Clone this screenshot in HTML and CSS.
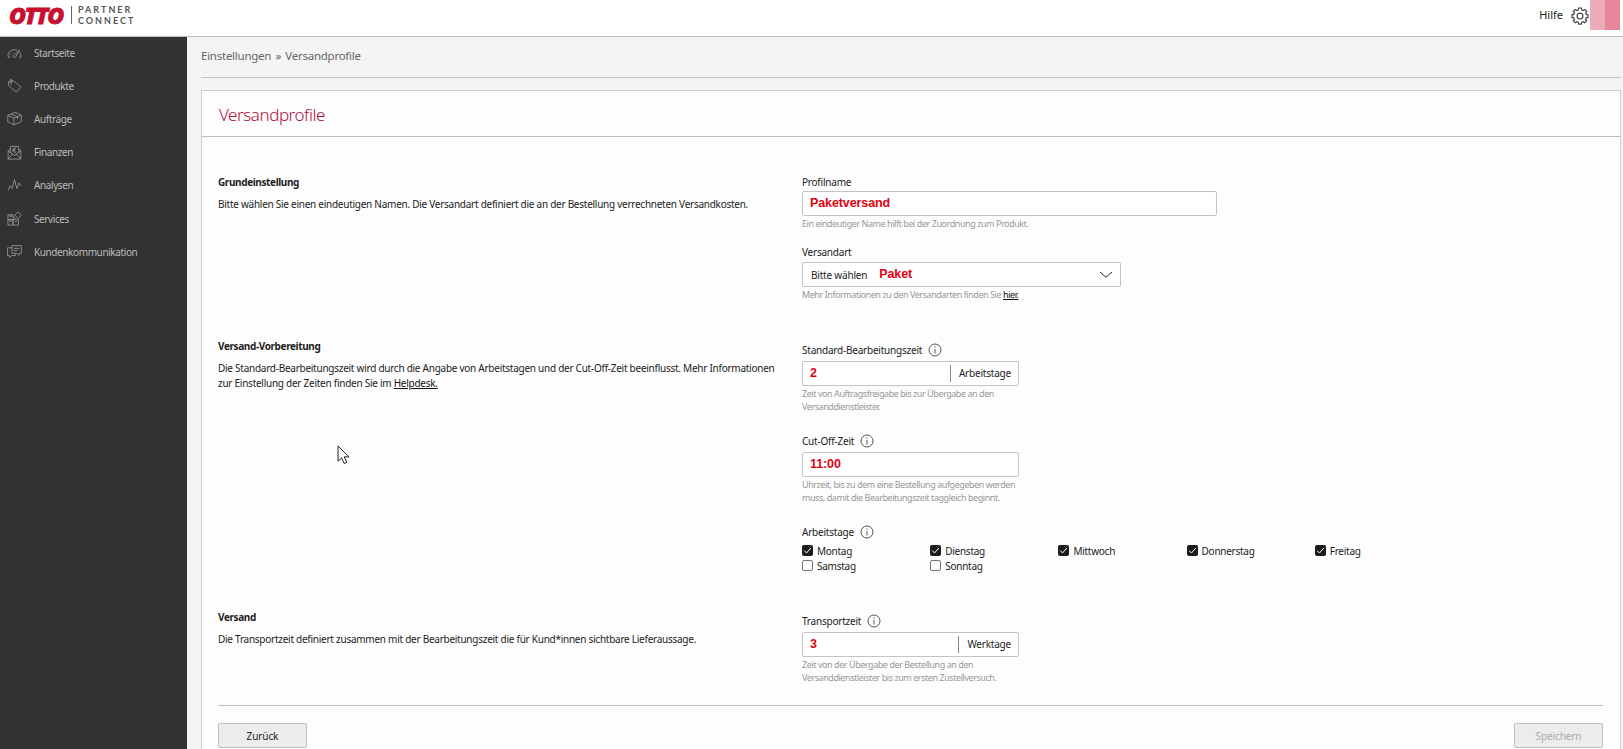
FILE: index.html
```
<!DOCTYPE html>
<html lang="de">
<head>
    <meta charset="UTF-8">
    <meta name="viewport" content="width=device-width, initial-scale=1.0">
    <title>OTTO Partner Connect - Versandprofile</title>
    <link rel="stylesheet" href="styles.css">
</head>
<body>
    <header class="topbar">
        <div class="logo">
            <span class="logo-otto">OTTO</span>
            <span class="logo-sub"><span>PARTNER</span><span>CONNECT</span></span>
        </div>
        <div class="topbar-right">
            <a class="help">Hilfe</a>
            <svg class="gear" viewBox="0 0 18 18">
                <path d="M7.6 1h2.8l.4 2 1.3.6 1.8-1.2 1.9 1.9-1.2 1.8.6 1.3 1.8.4v2.6l-1.9.4-.6 1.4 1.1 1.7-1.9 1.9-1.7-1.1-1.3.6-.4 1.8H7.7l-.4-1.8-1.4-.6-1.7 1.1-1.9-1.9 1.1-1.7-.6-1.4-1.9-.4V7.8l1.9-.4.6-1.3-1.1-1.8 1.9-1.9L6 3.6 7.3 3z"/>
                <circle cx="9" cy="9.1" r="2.9"/>
            </svg>
            <div class="avatar"></div>
        </div>
    </header>

    <div class="layout">
        <nav class="sidebar">
            <a class="nav-item">
                <svg viewBox="0 0 16 16"><path d="M3.500 13H1.300C.3 8.500 3.500 5 8 5c1.200 0 2.100.2 3 .7M13.500 7.500c1.100 1.500 1.500 3.500 1.200 5.500h-1.900M7 13c-.8-1-.1-2 .8-2.500L13.500 5.300 9.600 12c-.6 1.200-1.800 1.700-2.600 1zM3 9.800l1.200.4M5.200 7l.6.8"/></svg>
                <span>Startseite</span>
            </a>
            <a class="nav-item">
                <svg viewBox="0 0 16 16"><path d="M1.500 4 6.500 2.700l8.500 7.100-5 5.200L2 8.500zM4.800 7C3.500 5 3 2.500 4.300 1c1 .8 1.100 2.700.8 4.500"/></svg>
                <span>Produkte</span>
            </a>
            <a class="nav-item">
                <svg viewBox="0 0 16 16"><path d="M.8 4.800 8.500 1.500l6.800 3v6.800l-8 3.500-6.500-3.500zM.8 4.800l6.500 2.900 8-3.200M7.300 7.700v7.100M4.500 3.300l6.700 2.900v2.500"/></svg>
                <span>Aufträge</span>
            </a>
            <a class="nav-item">
                <svg viewBox="0 0 16 16"><path d="M1.200 6v9h13.600V6L12.500 4.500M1.200 6 3.500 4.500M3.500 8.200V1.500h9v6.700M1.200 6.500 8 11l6.800-4.500M1.200 15 6 9.800M14.800 15 10 9.800M9.800 3.500C7.500 2.800 6.600 4 6.600 5.500S7.500 8.300 9.800 7.600M5.800 5h3M5.800 6.200h3"/></svg>
                <span>Finanzen</span>
            </a>
            <a class="nav-item">
                <svg viewBox="0 0 16 16"><path d="m1 13.500 2.300-5.200 2 3L8 1.800l2.500 9.500 2.200-6 2.300 3.200"/></svg>
                <span>Analysen</span>
            </a>
            <a class="nav-item">
                <svg viewBox="0 0 16 16"><path d="M1 4h5.500v5.200H1zM1 9.200h5.500V15H1zM6.500 9.200h5.700V15H6.500zM8.200 4 12 1l3.300 3.500L11.500 8zM6.500 5.500 9 8M3 4v2h1.800V4M3 9.200v2h1.800M8.500 11.200h2"/></svg>
                <span>Services</span>
            </a>
            <a class="nav-item">
                <svg viewBox="0 0 16 16"><path d="M5.300 4H.6v8.300h2v2l2.600-2h3.700V10M5.300 1.800h10v8h-2.400v2.300l-2.900-2.300H5.300zM7.300 4.700h6M7.300 7h4"/></svg>
                <span>Kundenkommunikation</span>
            </a>
        </nav>

        <main class="content">
            <div class="breadcrumb">Einstellungen » Versandprofile</div>

            <div class="card">
                <h1 class="card-title">Versandprofile</h1>
                <form class="card-body">

                    <!-- Grundeinstellung -->
                    <section class="section section-basic">
                        <div class="section-info">
                            <h2>Grundeinstellung</h2>
                            <p>Bitte wählen Sie einen eindeutigen Namen. Die Versandart definiert die an der Bestellung verrechneten Versandkosten.</p>
                        </div>
                        <div class="section-fields">
                            <div class="field">
                                <div class="label">Profilname</div>
                                <div class="input input-wide"><span class="entry">Paketversand</span></div>
                                <div class="hint">Ein eindeutiger Name hilft bei der Zuordnung zum Produkt.</div>
                            </div>
                            <div class="field">
                                <div class="label">Versandart</div>
                                <div class="input input-select">
                                    <span class="placeholder">Bitte wählen</span>
                                    <span class="entry">Paket</span>
                                    <svg class="chevron" viewBox="0 0 14 8"><path d="m1 1.200 6 5 6-5"/></svg>
                                </div>
                                <div class="hint">Mehr Informationen zu den Versandarten finden Sie <a class="link">hier.</a></div>
                            </div>
                        </div>
                    </section>

                    <!-- Versand-Vorbereitung -->
                    <section class="section section-prep">
                        <div class="section-info">
                            <h2>Versand-Vorbereitung</h2>
                            <p>Die Standard-Bearbeitungszeit wird durch die Angabe von Arbeitstagen und der Cut-Off-Zeit beeinflusst. Mehr Informationen<br>zur Einstellung der Zeiten finden Sie im <a class="link">Helpdesk.</a></p>
                        </div>
                        <div class="section-fields">
                            <div class="field">
                                <div class="label">Standard-Bearbeitungszeit
                                    <svg class="info" viewBox="0 0 14 14"><circle cx="7" cy="7" r="6"/><path d="M7 6v4.500M7 3.500v1.200"/></svg>
                                </div>
                                <div class="input"><span class="entry">2</span><span class="unit">Arbeitstage</span></div>
                                <div class="hint">Zeit von Auftragsfreigabe bis zur Übergabe an den<br>Versanddienstleister.</div>
                            </div>
                            <div class="field">
                                <div class="label">Cut-Off-Zeit
                                    <svg class="info" viewBox="0 0 14 14"><circle cx="7" cy="7" r="6"/><path d="M7 6v4.500M7 3.500v1.200"/></svg>
                                </div>
                                <div class="input"><span class="entry">11:00</span></div>
                                <div class="hint">Uhrzeit, bis zu dem eine Bestellung aufgegeben werden<br>muss, damit die Bearbeitungszeit taggleich beginnt.</div>
                            </div>
                            <div class="field">
                                <div class="label">Arbeitstage
                                    <svg class="info" viewBox="0 0 14 14"><circle cx="7" cy="7" r="6"/><path d="M7 6v4.500M7 3.500v1.200"/></svg>
                                </div>
                                <div class="days">
                                    <div class="day"><svg class="box checked" viewBox="0 0 11 11"><path d="m2.300 5.700 2.200 2.300 4.300-5"/></svg>Montag</div>
                                    <div class="day"><svg class="box checked" viewBox="0 0 11 11"><path d="m2.300 5.700 2.200 2.300 4.300-5"/></svg>Dienstag</div>
                                    <div class="day"><svg class="box checked" viewBox="0 0 11 11"><path d="m2.300 5.700 2.200 2.300 4.300-5"/></svg>Mittwoch</div>
                                    <div class="day"><svg class="box checked" viewBox="0 0 11 11"><path d="m2.300 5.700 2.200 2.300 4.300-5"/></svg>Donnerstag</div>
                                    <div class="day"><svg class="box checked" viewBox="0 0 11 11"><path d="m2.300 5.700 2.200 2.300 4.300-5"/></svg>Freitag</div>
                                    <div class="day"><span class="box"></span>Samstag</div>
                                    <div class="day"><span class="box"></span>Sonntag</div>
                                </div>
                            </div>
                        </div>
                    </section>

                    <!-- Versand -->
                    <section class="section section-shipping">
                        <div class="section-info">
                            <h2>Versand</h2>
                            <p>Die Transportzeit definiert zusammen mit der Bearbeitungszeit die für Kund*innen sichtbare Lieferaussage.</p>
                        </div>
                        <div class="section-fields">
                            <div class="field">
                                <div class="label">Transportzeit
                                    <svg class="info" viewBox="0 0 14 14"><circle cx="7" cy="7" r="6"/><path d="M7 6v4.500M7 3.500v1.200"/></svg>
                                </div>
                                <div class="input"><span class="entry">3</span><span class="unit">Werktage</span></div>
                                <div class="hint">Zeit von der Übergabe der Bestellung an den<br>Versanddienstleister bis zum ersten Zustellversuch.</div>
                            </div>
                        </div>
                    </section>

                    <div class="actions">
                        <button type="button" class="btn">Zurück</button>
                        <button type="button" class="btn" disabled>Speichern</button>
                    </div>
                </form>
            </div>
        </main>
    </div>

    <svg class="cursor" viewBox="0 0 13 20"><path d="M1 1v15.200l3.600-3.400 2.600 5.700 2.600-1.200-2.600-5.400h4.900z"/></svg>
</body>
</html>
```
FILE: styles.css
```
* {
    box-sizing: border-box;
}
body {
    margin: 0;
    height: 100vh;
    overflow: hidden;
    display: flex;
    flex-direction: column;
    background-color: #f4f4f4;
    color: #222;
    font-family: "Noto Sans", sans-serif;
    font-size: 10px;
    letter-spacing: -0.26px;
}
svg {
    fill: none;
    stroke: currentColor;
    flex: none;
}

/* Top bar */
.topbar {
    height: 37px;
    flex: none;
    display: flex;
    justify-content: space-between;
    align-items: flex-start;
    background-color: #fff;
    border-bottom: 1px solid #bdbdbd;
}
.logo {
    display: flex;
    padding: 6px 0 0 9px;
}
.logo-otto {
    width: 61px;
    height: 19px;
    line-height: 18px;
    font-family: "Open Sans", sans-serif;
    font-size: 23px;
    font-weight: 800;
    font-style: italic;
    letter-spacing: -1.400px;
    color: #c8102e;
    -webkit-text-stroke: 0.8px #c8102e;
}
.logo-sub {
    display: flex;
    flex-direction: column;
    height: 18px;
    margin-left: 1px;
    padding-left: 6px;
    border-left: 1px solid #666;
    font-family: Lato, sans-serif;
    font-size: 9px;
    font-weight: 700;
    line-height: 10px;
    letter-spacing: 2px;
    color: #555;
}
.logo-sub span {
    margin-top: -1px;
    margin-bottom: 2px;
}
.topbar-right {
    display: flex;
    padding-right: 3px;
}
.help {
    margin-top: 7px;
    font-size: 11px;
    line-height: 16px;
    letter-spacing: 0;
}
.gear {
    width: 18px;
    height: 18px;
    margin: 7px 1px 0 8px;
    stroke: #444;
    stroke-width: 1.200;
}
.avatar {
    width: 30px;
    height: 30px;
    background: linear-gradient(90deg, #ecabb8 50%, #e5869a 50%);
}

/* Sidebar */
.layout {
    flex: 1;
    min-height: 0;
    display: flex;
}
.sidebar {
    width: 187px;
    flex: none;
    background-color: #323232;
    color: #bbb;
}
.nav-item {
    display: flex;
    align-items: center;
    gap: 12px;
    height: 33.200px;
    padding: 0 0 2px 7px;
    letter-spacing: -0.4px;
}
.nav-item svg {
    width: 15px;
    height: 15px;
    stroke: #999;
    stroke-width: 0.9;
}

/* Content */
.content {
    flex: 1;
    display: flex;
    flex-direction: column;
    padding: 0 2px 0 14px;
}
.breadcrumb {
    height: 41px;
    flex: none;
    padding-top: 10px;
    border-bottom: 1px solid #c4c4c4;
    font-size: 11.500px;
    line-height: 18px;
    letter-spacing: -0.25px;
    word-spacing: 1.500px;
    color: #666;
}
.card {
    flex: 1;
    min-height: 0;
    margin-top: 12px;
    background-color: #fdfdfd;
    border: 1px solid #ccc;
    border-bottom: 0;
}
.card-title {
    height: 46px;
    margin: 0;
    padding-left: 17px;
    border-bottom: 1px solid #bdbdbd;
    font-size: 17px;
    font-weight: 300;
    line-height: 47px;
    letter-spacing: -0.45px;
    color: #b0103a;
}
.card-body {
    padding: 36px 17px 0 16px;
}
.section {
    display: grid;
    grid-template-columns: 584px 1fr;
}
.section-basic {
    height: 164px;
}
.section-prep {
    height: 271px;
}
.section-shipping {
    height: 97px;
}
.section h2 {
    margin: 0;
    font-size: 10px;
    font-weight: 700;
    line-height: 18px;
    letter-spacing: -0.38px;
}
.section p {
    margin: 6px 0 0;
    line-height: 15px;
    white-space: nowrap;
}
.link {
    color: #111;
    text-decoration: underline;
}

/* Fields */
.field {
    margin-bottom: 12px;
}
.section-prep .field {
    margin-bottom: 18px;
}
.section-prep .section-fields,
.section-shipping .section-fields {
    padding-top: 3px;
}
.label {
    display: flex;
    align-items: center;
    gap: 6px;
    height: 20px;
    padding-bottom: 1px;
    margin-bottom: 1px;
    letter-spacing: -0.22px;
}
.section-basic .label {
    height: 18px;
    margin-bottom: 0;
    padding-bottom: 0;
}
.section-basic .field + .field .label {
    height: 20px;
}
.info {
    width: 14px;
    height: 14px;
    stroke: #444;
    stroke-width: 0.9;
}
.input {
    width: 217px;
    height: 25px;
    display: flex;
    align-items: center;
    padding: 0 7px;
    background-color: #fff;
    border: 1px solid #c4c4c4;
    border-radius: 2px;
    letter-spacing: -0.2px;
}
.input-wide {
    width: 415px;
}
.input-select {
    width: 319px;
    padding-left: 8px;
}
.placeholder {
    margin-right: 12px;
}
.chevron {
    width: 14px;
    height: 8px;
    margin-left: auto;
    stroke: #222;
}
.entry {
    padding-bottom: 1px;
    font-family: "Liberation Sans", Arial, sans-serif;
    font-size: 12.500px;
    font-weight: 700;
    letter-spacing: -0.1px;
    color: #e3000f;
}
.unit {
    height: 17px;
    margin-left: auto;
    padding-left: 8px;
    border-left: 1px solid #888;
    line-height: 17px;
}
.hint {
    padding-top: 1px;
    font-size: 9px;
    line-height: 13px;
    letter-spacing: -0.44px;
    color: #999;
}
.days {
    display: grid;
    grid-template-columns: repeat(5, 128.200px);
    grid-auto-rows: 15px;
}
.day {
    display: flex;
    align-items: center;
    gap: 4px;
}
.box {
    width: 11px;
    height: 11px;
    border: 1px solid #777;
    border-radius: 2px;
    background-color: #fff;
}
.box.checked {
    border: 0;
    background-color: #1c1c1c;
    stroke: #fff;
}

/* Buttons */
.actions {
    display: flex;
    justify-content: space-between;
    padding-top: 17px;
    border-top: 1px solid #bdbdbd;
}
.btn {
    width: 89px;
    height: 25px;
    padding: 0;
    background-color: #ececec;
    border: 1px solid #bdbdbd;
    border-radius: 2px;
    font-family: inherit;
    font-size: 10px;
    letter-spacing: -0.1px;
    color: #222;
}
.btn:disabled {
    color: #aaa;
}

.cursor {
    position: absolute;
    left: 337px;
    top: 445px;
    width: 13px;
    height: 20px;
    fill: #fff;
    stroke: #222;
}
```
